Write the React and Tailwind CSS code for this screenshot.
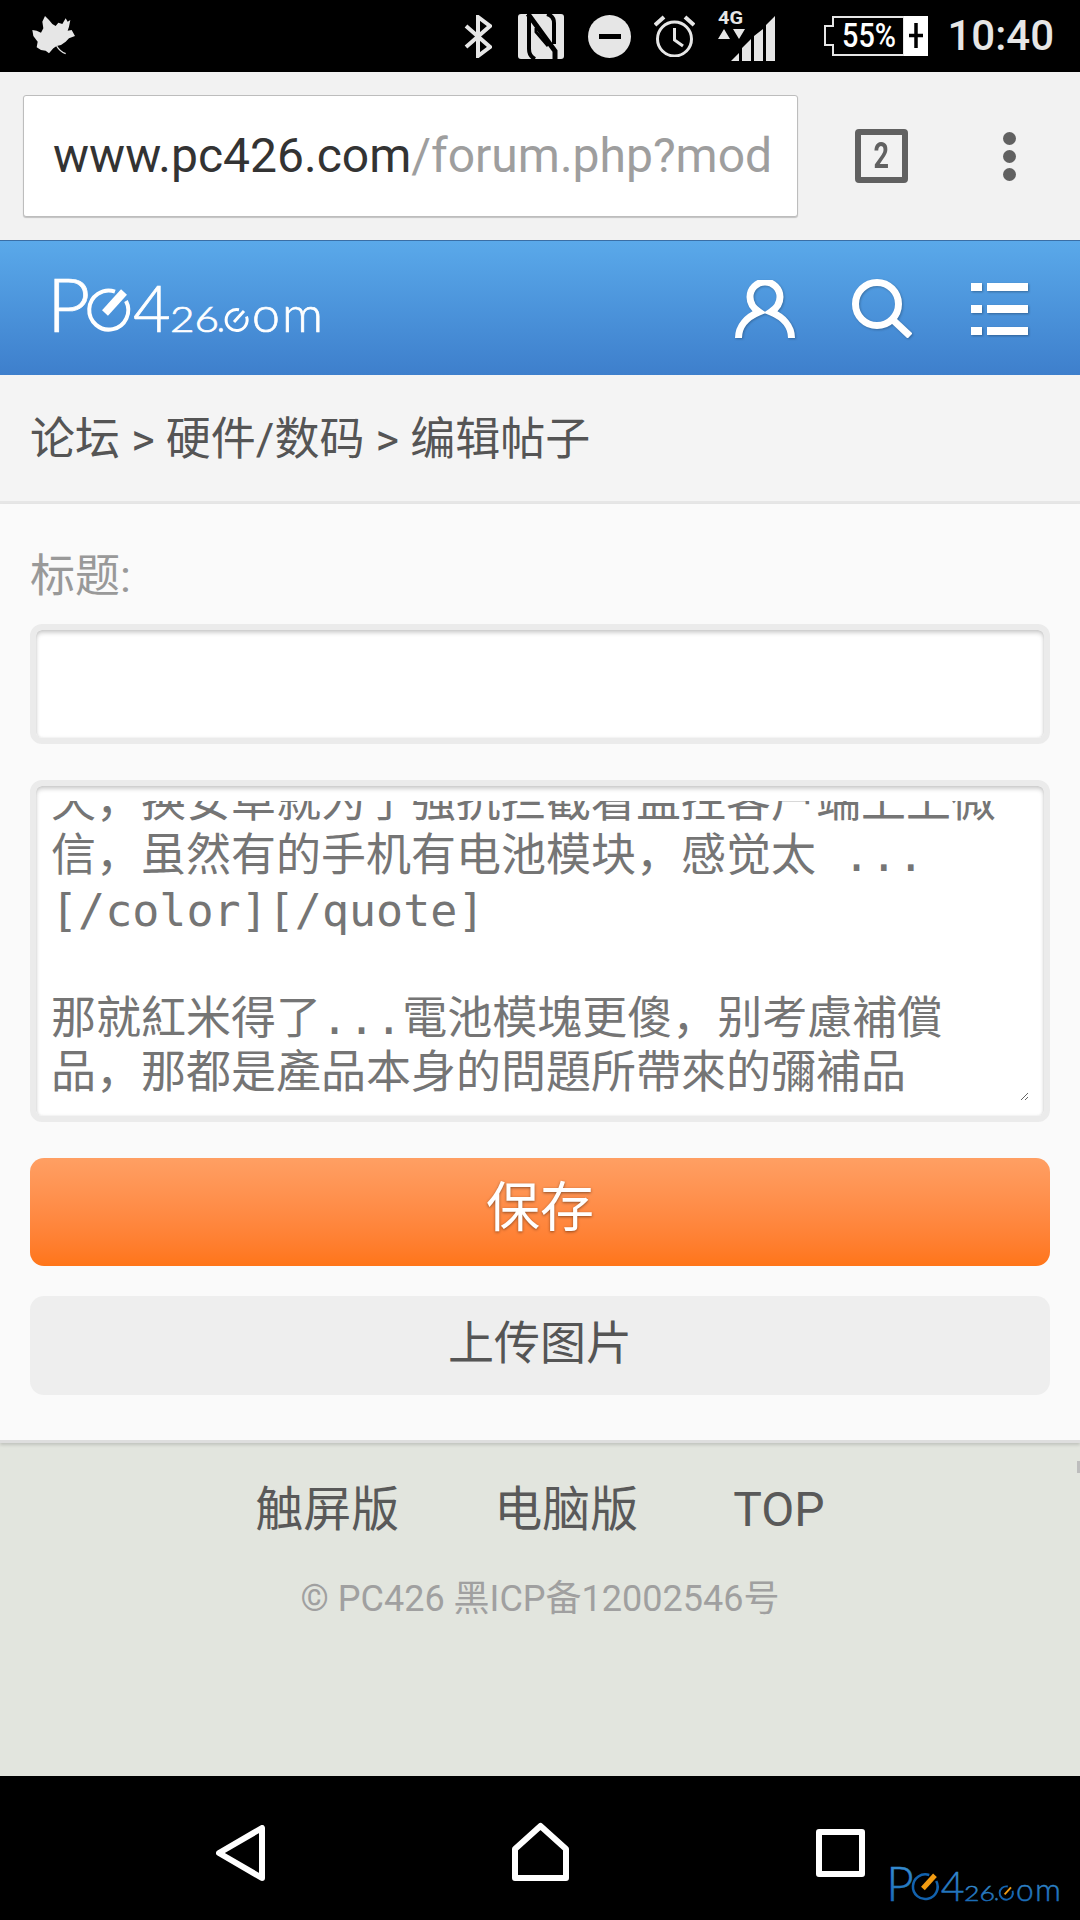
import React, { useEffect, useRef } from 'react';

const replyText = `天，换安卓就为了强抗拦截看监控客户端上上微
信，虽然有的手机有电池模块，感觉太 ...
[/color][/quote]

那就紅米得了...電池模塊更傻，别考慮補償
品，那都是產品本身的問題所帶來的彌補品


`;

// logo letters are live text, only the gauge rings are drawn
const Logo = ({ className, fill, tick, ringId }) => (
  <svg viewBox="0 0 270 54" className={`overflow-visible ${className}`} fill="none">
    <defs>
      <linearGradient id={ringId} x1="0" y1="0" x2="0" y2="1">
        <stop offset="0" stopColor={fill[0]} />
        <stop offset="1" stopColor={fill[1]} />
      </linearGradient>
    </defs>
    <g fill={`url(#${ringId})`} stroke={`url(#${ringId})`} strokeWidth="0.7" fontFamily="Lato, sans-serif" fontWeight="300">
      <text x="-6" y="54" fontSize="75">P</text>
      <text x="80" y="54" fontSize="65">4</text>
      <text x="117" y="54" fontSize="35" textLength="49" lengthAdjust="spacingAndGlyphs">26</text>
      <circle cx="168" cy="52" r="1.8" />
      <text x="199" y="54" fontSize="50">o</text>
      <text x="229" y="54" fontSize="50" textLength="41" lengthAdjust="spacingAndGlyphs">m</text>
    </g>
    <path d="M62 13.6A19.5 19.5 0 1 0 73 23" stroke={fill[1]} strokeWidth="4" />
    <path d="M52 35L71 14" stroke={tick} strokeWidth="8" />
    <path d="M186 31.8A10.5 10.5 0 1 0 193.5 38.5" stroke={fill[1]} strokeWidth="3" />
    <path d="M181 44L191 33" stroke={tick} strokeWidth="3" />
  </svg>
);

const StatusBar = () => (
  <div className="flex h-[72px] shrink-0 items-center bg-black pl-[25px] pr-[26px]">
    {/* notification leaf */}
    <svg viewBox="0 0 180 156" className="h-[52px] w-[60px]" fill="#e6e6e6">
      <path d="M60 18L72 30L82 42L92 48L100 38L112 42L122 25L128 35L136 30L132 50L128 62L140 60L150 78L132 85L122 95L108 105L95 108L85 115L72 130L62 122L48 120L35 112L38 95L25 78L22 60L35 62L48 68L55 55L52 35Z" />
      <path d="M95 108Q105 125 122 131" fill="none" stroke="#e6e6e6" strokeWidth="4" />
    </svg>
    {/* bluetooth */}
    <svg viewBox="0 0 28 43" className="ml-auto h-[43px] w-[28px]" fill="none" stroke="#e6e6e6" strokeWidth="4">
      <path d="M2 11L26 32L14 41V2L26 11L2 32" />
    </svg>
    {/* nfc */}
    <svg viewBox="0 0 46 45" className="ml-[26px] h-[45px] w-[46px]" fill="none" stroke="#000">
      <rect width="46" height="45" rx="3" fill="#e6e6e6" stroke="none" />
      <path d="M11 0V35Q11 42 17 45" strokeWidth="4" />
      <path d="M10 0L37 37V45" strokeWidth="5" />
      <path d="M29 0Q36 2 36 9V30" strokeWidth="4" />
      <path d="M18 14V18L30 32" strokeWidth="3" />
    </svg>
    {/* do not disturb */}
    <svg viewBox="0 0 43 43" className="ml-[24px] h-[43px] w-[43px]">
      <circle cx="21.5" cy="21.5" r="21.5" fill="#e6e6e6" />
      <rect x="11" y="19" width="22" height="5" fill="#000" />
    </svg>
    {/* alarm */}
    <svg viewBox="0 0 41 42" className="ml-[23px] h-[42px] w-[41px]" fill="none" stroke="#e6e6e6" strokeWidth="3">
      <circle cx="20.5" cy="24" r="17" />
      <path d="M20.5 13V25L29 31" />
      <path d="M1 10L10 2M40 10L31 2" strokeWidth="4" />
    </svg>
    {/* signal */}
    <svg viewBox="0 0 57 50" className="ml-[23px] h-[50px] w-[57px] overflow-visible" fill="#e6e6e6">
      <text x="0" y="13" fontSize="18" fontWeight="700" fontFamily="Roboto, sans-serif" textLength="25" lengthAdjust="spacingAndGlyphs">4G</text>
      <path d="M6 18L0 28H12ZM15 18H27L21 28Z" />
      <path d="M13 50L21 42V50ZM24 37L33 28V50H24ZM36 25L45 18V50H36ZM48 14L57 5V50H48Z" />
    </svg>
    {/* battery */}
    <svg viewBox="0 0 104 40" className="ml-[49px] h-[40px] w-[104px] overflow-visible" fill="none">
      <path d="M9 1H80V39H9V29H1V10H9Z" stroke="#e6e6e6" strokeWidth="2" />
      <text x="18" y="31" fontSize="33" fontWeight="500" fontFamily="Roboto, sans-serif" fill="#fff" textLength="54" lengthAdjust="spacingAndGlyphs">55%</text>
      <rect x="80" y="0" width="24" height="40" fill="#fff" />
      <path d="M92 7V32M85 19.5H99" stroke="#000" strokeWidth="3.5" />
    </svg>
    <span className="ml-[19px] text-[42px] leading-none font-medium text-[#e6e6e6]">10:40</span>
  </div>
);

const BrowserBar = () => (
  <div className="flex h-[168px] shrink-0 items-start bg-[#f2f2f2] pl-[23px] pt-[23px]">
    <div className="flex h-[122px] w-[775px] items-center overflow-hidden rounded-[3px] border border-[#bdbdbd] bg-white pl-[29px] shadow-[0_1px_1px_rgba(0,0,0,0.2)]">
      <span className="text-[48px] whitespace-nowrap text-[#9e9e9e]">
        <span className="text-[#333]">www.pc426.com</span>/forum.php?mod
      </span>
    </div>
    <div className="ml-[57px] mt-[34px] flex h-[54px] w-[53px] items-center justify-center rounded-[4px] border-[6px] border-[#616161] text-[36px] font-bold text-[#616161]">
      <span className="scale-x-75">2</span>
    </div>
    <div className="ml-[95px] mt-[37px] flex flex-col gap-[5px]">
      <span className="size-[13px] rounded-full bg-[#616161]" />
      <span className="size-[13px] rounded-full bg-[#616161]" />
      <span className="size-[13px] rounded-full bg-[#616161]" />
    </div>
  </div>
);

const SiteHeader = () => (
  <div className="flex h-[135px] shrink-0 items-start border-t border-[#3a6ea5] bg-gradient-to-b from-[#5aa9ea] to-[#3e7fcc] pl-[53px] pr-[51px] pt-[37px]">
    <Logo className="h-[54px] w-[270px]" fill={['#ffffff', '#ffffff']} tick="#ffffff" ringId="logoWhite" />
    <svg viewBox="0 0 60 58" className="ml-auto mt-[2px] h-[58px] w-[60px] drop-shadow-[1px_1px_1px_rgba(0,0,0,0.25)]" fill="none" stroke="#fff" strokeWidth="7">
      <path d="M3.5 58C3.5 46 12 37 24 32C18 28 15 22 15 17A15 15 0 0 1 45 17C45 22 42 28 36 32C48 37 56.5 46 56.5 58" />
    </svg>
    <svg viewBox="0 0 60 59" className="ml-[57px] mt-[1px] h-[59px] w-[60px] drop-shadow-[1px_1px_1px_rgba(0,0,0,0.25)]" fill="none" stroke="#fff" strokeWidth="7">
      <circle cx="25" cy="25" r="21.5" />
      <path d="M41 41L58 57" />
    </svg>
    <svg viewBox="0 0 58 52" className="ml-[59px] mt-[5px] h-[52px] w-[58px] drop-shadow-[1px_1px_1px_rgba(0,0,0,0.3)]" fill="#fff">
      <path d="M0 0H11V8H0ZM16 0H57V8H16ZM0 22H11V30H0ZM16 22H57V30H16ZM0 44H11V52H0ZM16 44H57V52H16Z" />
    </svg>
  </div>
);

const EditForm = () => {
  const areaRef = useRef(null);

  // the reference shows the reply scrolled a little down
  useEffect(() => {
    if (areaRef.current) areaRef.current.scrollTop = 26;
  }, []);

  return (
    <div className="relative z-10 flex h-[939px] shrink-0 flex-col border-b-[3px] border-[#dedede] bg-[#fafafa] px-[30px] pt-[43px] shadow-[0_2px_3px_rgba(0,0,0,0.15)]">
      <label className="mb-[17px] text-[45px] leading-[60px] text-[#999]">标题:</label>
      <input
        type="text"
        className="mb-[36px] h-[120px] w-full rounded-[12px] border-[6px] border-[#ebebeb] bg-white shadow-[inset_0_3px_4px_rgba(0,0,0,0.18),inset_0_0_3px_rgba(0,0,0,0.1)] outline-none"
      />
      <div className="mb-[36px] h-[342px] rounded-[12px] border-[6px] border-[#ebebeb] bg-white p-[15px] shadow-[inset_0_3px_4px_rgba(0,0,0,0.18),inset_0_0_3px_rgba(0,0,0,0.1)]">
        <textarea
          ref={areaRef}
          readOnly
          wrap="off"
          value={replyText}
          className="block h-[300px] w-full resize overflow-auto bg-transparent font-['DejaVu_Sans_Mono','Noto_Sans_CJK_SC',monospace] text-[45px] leading-[54.25px] text-[#757575] outline-none [scrollbar-width:none]"
        />
      </div>
      <button className="mb-[30px] h-[108px] w-full rounded-[14px] bg-gradient-to-b from-[#ff9f63] to-[#ff7518] pb-[8px] text-[54px] text-white [text-shadow:0_1px_3px_rgba(0,0,0,0.45)]">
        保存
      </button>
      <button className="h-[99px] w-full rounded-[14px] bg-[#eeeeee] pb-[4px] text-[46px] text-[#555]">
        上传图片
      </button>
    </div>
  );
};

const Footer = () => (
  <div className="relative flex grow flex-col items-center bg-[#e2e5de] pt-[37px]">
    <span className="absolute right-0 top-[18px] h-[12px] w-[3px] bg-[#bdbdbd]" />
    <div className="flex gap-[95px] text-[48px] leading-[60px] text-[#595959]">
      <span>触屏版</span>
      <span>电脑版</span>
      <span>TOP</span>
    </div>
    <p className="mt-[34px] text-[36px] leading-[50px] text-[#a0a0a0]">© PC426 黑ICP备12002546号</p>
  </div>
);

const NavBar = () => (
  <div className="relative flex h-[144px] shrink-0 items-start bg-black pl-[216px]">
    <svg viewBox="0 0 49 56" className="mt-[49px] h-[56px] w-[49px]" fill="none" stroke="#fff" strokeWidth="6" strokeLinejoin="round">
      <path d="M46 3V53L3 28Z" />
    </svg>
    <svg viewBox="0 0 57 59" className="ml-[247px] mt-[46px] h-[59px] w-[57px]" fill="none" stroke="#fff" strokeWidth="6" strokeLinejoin="round">
      <path d="M28.5 4L54 27V56H3V27Z" />
    </svg>
    <svg viewBox="0 0 49 48" className="ml-[247px] mt-[53px] h-[48px] w-[49px]" fill="none" stroke="#fff" strokeWidth="6" strokeLinejoin="round">
      <rect x="3" y="3" width="43" height="42" />
    </svg>
    <Logo className="absolute bottom-[19px] right-[19px] h-[35px] w-[171px]" fill={['#3f97d8', '#1262ae']} tick="#f39c12" ringId="logoBlue" />
  </div>
);

export default function App() {
  return (
    <div className="flex h-[1920px] w-[1080px] flex-col overflow-hidden font-['Roboto','Noto_Sans_CJK_SC',sans-serif]">
      <StatusBar />
      <BrowserBar />
      <SiteHeader />
      <div className="flex h-[129px] shrink-0 items-center border-b-[3px] border-[#e6e6e6] bg-[#f4f4f4] pl-[30px] pt-[3px] text-[45px] text-[#555]">
        论坛 &gt; 硬件/数码 &gt; 编辑帖子
      </div>
      <EditForm />
      <Footer />
      <NavBar />
    </div>
  );
}
